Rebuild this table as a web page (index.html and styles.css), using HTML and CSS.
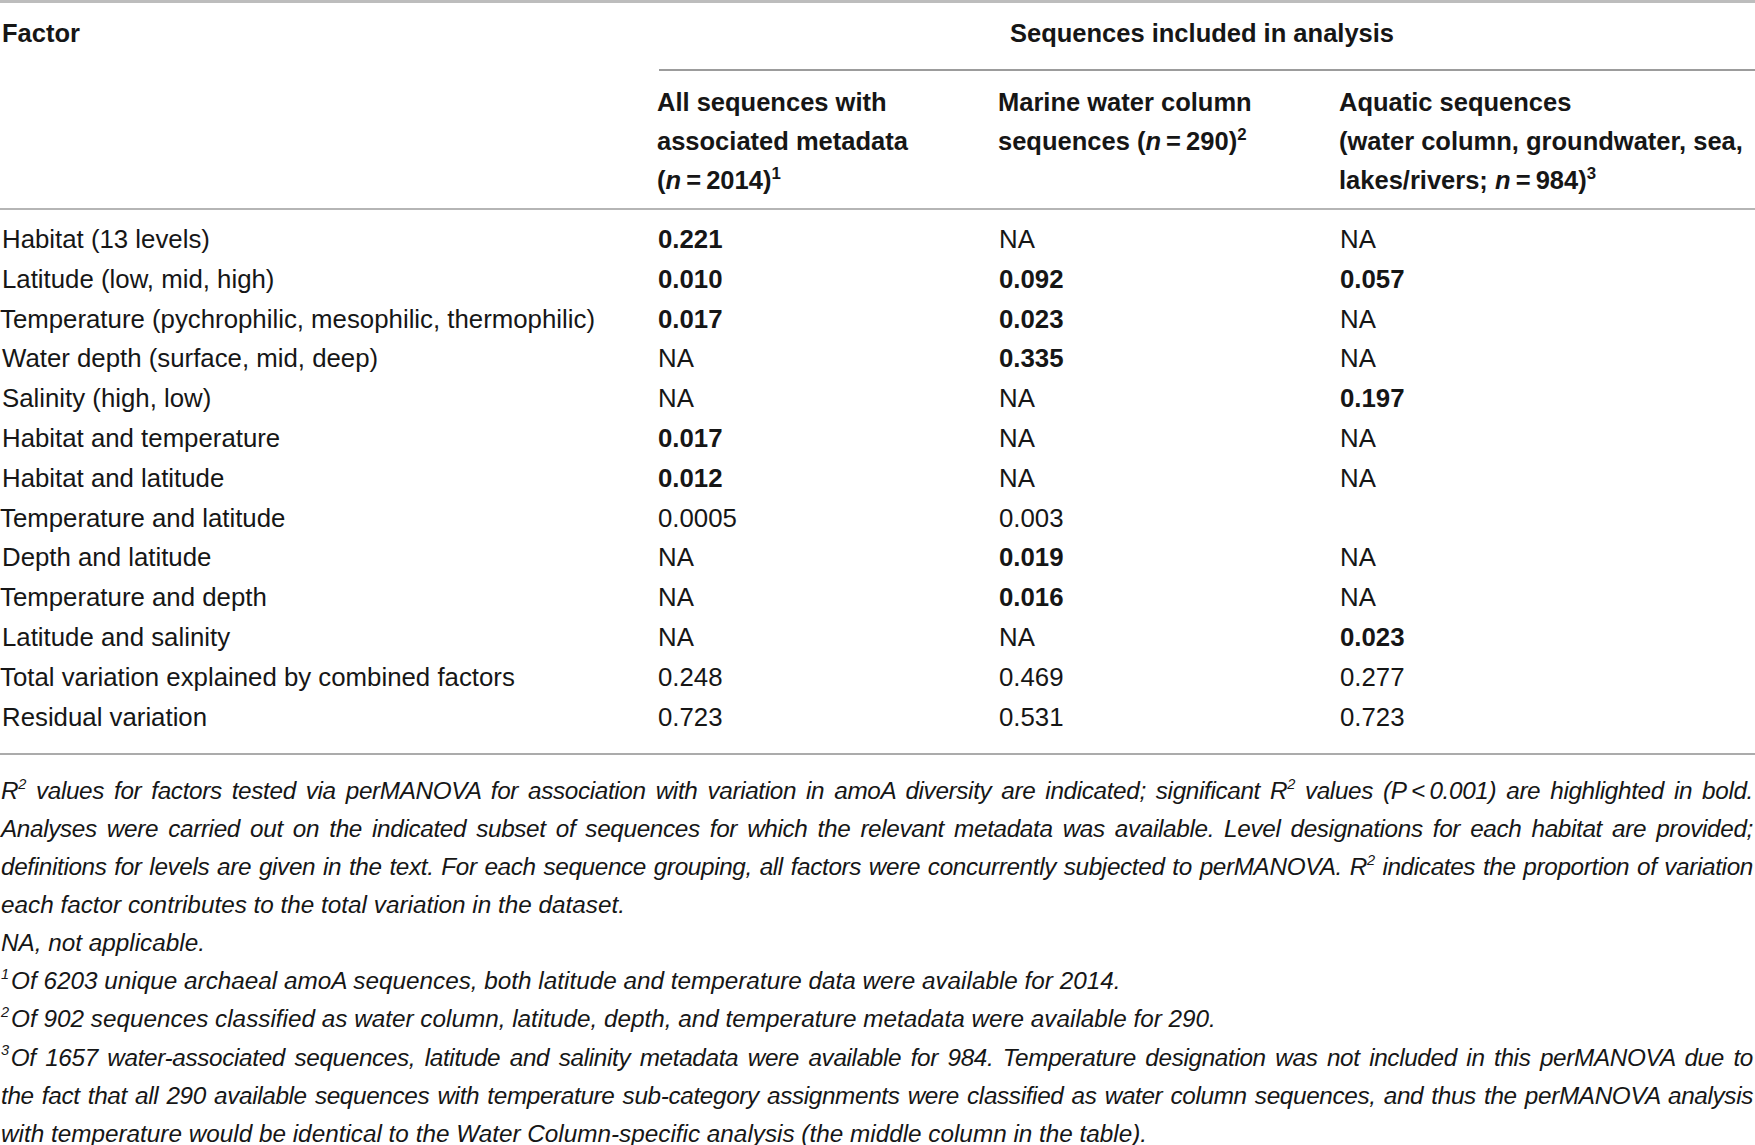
FILE: index.html
```html
<!DOCTYPE html>
<html>
<head>
<meta charset="utf-8">
<link rel="stylesheet" href="styles.css">
</head>
<body>
<div class="page">
  <table class="data">
    <colgroup>
      <col class="c1"><col class="c2"><col class="c3"><col class="c4">
    </colgroup>
    <thead>
      <tr class="h1">
        <th class="factor" rowspan="2">Factor</th>
        <th class="span" colspan="3"><div class="span-inner">Sequences included in analysis</div></th>
      </tr>
      <tr class="h2">
        <th class="sub">All sequences with<br>associated metadata<br>(<i>n</i>&thinsp;=&thinsp;2014)<sup>1</sup></th>
        <th class="sub">Marine water column<br>sequences (<i>n</i>&thinsp;=&thinsp;290)<sup>2</sup></th>
        <th class="sub">Aquatic sequences<br>(water column, groundwater, sea,<br>lakes/rivers; <i>n</i>&thinsp;=&thinsp;984)<sup>3</sup></th>
      </tr>
    </thead>
    <tbody>
      <tr class="first"><td>Habitat (13 levels)</td><td><b>0.221</b></td><td>NA</td><td>NA</td></tr>
      <tr><td>Latitude (low, mid, high)</td><td><b>0.010</b></td><td><b>0.092</b></td><td><b>0.057</b></td></tr>
      <tr><td class="tight">Temperature (pychrophilic, mesophilic, thermophilic)</td><td><b>0.017</b></td><td><b>0.023</b></td><td>NA</td></tr>
      <tr><td>Water depth (surface, mid, deep)</td><td>NA</td><td><b>0.335</b></td><td>NA</td></tr>
      <tr><td>Salinity (high, low)</td><td>NA</td><td>NA</td><td><b>0.197</b></td></tr>
      <tr><td>Habitat and temperature</td><td><b>0.017</b></td><td>NA</td><td>NA</td></tr>
      <tr><td>Habitat and latitude</td><td><b>0.012</b></td><td>NA</td><td>NA</td></tr>
      <tr><td class="tight">Temperature and latitude</td><td>0.0005</td><td>0.003</td><td></td></tr>
      <tr><td>Depth and latitude</td><td>NA</td><td><b>0.019</b></td><td>NA</td></tr>
      <tr><td class="tight">Temperature and depth</td><td>NA</td><td><b>0.016</b></td><td>NA</td></tr>
      <tr><td>Latitude and salinity</td><td>NA</td><td>NA</td><td><b>0.023</b></td></tr>
      <tr><td class="tight">Total variation explained by combined factors</td><td>0.248</td><td>0.469</td><td>0.277</td></tr>
      <tr class="last"><td>Residual variation</td><td>0.723</td><td>0.531</td><td>0.723</td></tr>
    </tbody>
  </table>
  <div class="caption">
    <div class="line just"><span class="r2">R<sup>2</sup></span> values for factors tested via perMANOVA for association with variation in amoA diversity are indicated; significant <span class="r2">R<sup>2</sup></span> values (P&thinsp;&lt;&thinsp;0.001) are highlighted in bold.</div>
    <div class="line just">Analyses were carried out on the indicated subset of sequences for which the relevant metadata was available. Level designations for each habitat are provided;</div>
    <div class="line just">definitions for levels are given in the text. For each sequence grouping, all factors were concurrently subjected to perMANOVA. <span class="r2">R<sup>2</sup></span> indicates the proportion of variation</div>
    <div class="line">each factor contributes to the total variation in the dataset.</div>
    <div class="line">NA, not applicable.</div>
    <div class="line"><sup class="fn">1</sup>Of 6203 unique archaeal amoA sequences, both latitude and temperature data were available for 2014.</div>
    <div class="line"><sup class="fn">2</sup>Of 902 sequences classified as water column, latitude, depth, and temperature metadata were available for 290.</div>
    <div class="line just"><sup class="fn">3</sup>Of 1657 water-associated sequences, latitude and salinity metadata were available for 984. Temperature designation was not included in this perMANOVA due to</div>
    <div class="line just">the fact that all 290 available sequences with temperature sub-category assignments were classified as water column sequences, and thus the perMANOVA analysis</div>
    <div class="line">with temperature would be identical to the Water Column-specific analysis (the middle column in the table).</div>
  </div>
</div>
</body>
</html>
```

FILE: styles.css
```css
html, body {
  margin: 0;
  padding: 0;
  background: #ffffff;
}
body {
  font-family: "Liberation Sans", Arial, sans-serif;
  color: #161616;
  font-size: 25.8px;
}
.page {
  width: 1755px;
  overflow: hidden;
}
.data {
  border-collapse: collapse;
  width: 1755px;
  table-layout: fixed;
  border-top: 3px solid #bdbdbd;
  border-bottom: 2px solid #ababab;
}
.c1 { width: 657px; }
.c2 { width: 341px; }
.c3 { width: 341px; }
.c4 { width: 416px; }
th, td {
  padding: 0;
  text-align: left;
  vertical-align: top;
  line-height: 39px;
  font-weight: normal;
  white-space: nowrap;
}
th {
  font-weight: bold;
  font-size: 25.5px;
}
.factor {
  padding: 11px 0 0 2px;
  border-bottom: 2px solid #b5b5b5;
}
.h1 .span {
  padding: 11px 10px 0 2px;
}
.span-inner {
  text-align: center;
  border-bottom: 2px solid #9c9c9c;
  padding-bottom: 16px;
  margin-right: -10px;
  padding-right: 10px;
}
.h2 th {
  padding: 11.5px 0 8.5px 0;
  border-bottom: 2px solid #b5b5b5;
}
.h2 sup {
  font-size: 0.66em;
  line-height: 0;
  vertical-align: 0.6em;
}
td {
  line-height: 39.8px;
}
td:first-child {
  padding-left: 2px;
}
td.tight {
  padding-left: 0;
}
tbody .first td {
  padding-top: 10px;
}
tbody .last td {
  padding-bottom: 16px;
}
td:not(:first-child) {
  padding-left: 1px;
}
b {
  font-weight: bold;
}
.caption {
  padding-top: 16.5px;
  font-style: italic;
  font-size: 24.3px;
  line-height: 38.1px;
  width: 1753px;
}
.line {
  white-space: nowrap;
  padding-left: 1px;
}
.line.just {
  text-align: justify;
  text-align-last: justify;
  letter-spacing: -0.35px;
}
.caption sup {
  font-size: 0.6em;
  line-height: 0;
  vertical-align: 0.7em;
}
.caption .fn {
  margin-right: 2px;
}
```
